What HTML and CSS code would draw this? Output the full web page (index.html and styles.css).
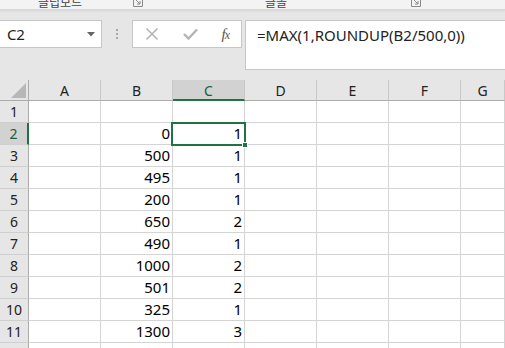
FILE: index.html
```html
<!DOCTYPE html>
<html>
<head>
<meta charset="utf-8">
<link rel="stylesheet" href="styles.css">
</head>
<body>
<div class="ribbon">
  <span class="grp grp1">클립보드</span>
  <span class="launch l1"><svg width="10" height="8" viewBox="0 0 10 8"><path d="M0.5 0 V7.5 H9.5 V0 M3 1 L7 5 M7 2 V5 H4" fill="none" stroke="#8a8a8a" stroke-width="1"/></svg></span>
  <span class="grp grp2">글꼴</span>
  <span class="launch l2"><svg width="10" height="8" viewBox="0 0 10 8"><path d="M0.5 0 V7.5 H9.5 V0 M3 1 L7 5 M7 2 V5 H4" fill="none" stroke="#8a8a8a" stroke-width="1"/></svg></span>
</div>
<div class="fbar">
  <div class="namebox">
    <span class="ref">C2</span>
    <svg class="caret" width="8" height="5" viewBox="0 0 8 5"><path d="M0 0 H8 L4 4.5 Z" fill="#666"/></svg>
  </div>
  <div class="dots"><i></i><i></i><i></i></div>
  <div class="fxbox">
    <svg width="14" height="14" viewBox="0 0 14 14"><path d="M1.5 1.5 L12.5 12.5 M12.5 1.5 L1.5 12.5" stroke="#b4b4b4" stroke-width="1.6" fill="none"/></svg>
    <svg width="15" height="12" viewBox="0 0 15 12"><path d="M1 6 L5.5 10.5 L14 1.5" stroke="#b4b4b4" stroke-width="2.4" fill="none"/></svg>
    <span class="fx">f<span class="x">x</span></span>
  </div>
  <div class="finput">=MAX(1,ROUNDUP(B2/500,0))</div>
</div>
<div class="sheet">
  <div class="corner"><svg width="15" height="15" viewBox="0 0 15 15"><path d="M15 0 V15 H0 Z" fill="#b7b7b7"/></svg></div>
  <div class="ch">A</div><div class="ch">B</div><div class="ch sel">C</div><div class="ch">D</div><div class="ch">E</div><div class="ch">F</div><div class="ch">G</div>

  <div class="rh">1</div><div class="c"></div><div class="c"></div><div class="c"></div><div class="c"></div><div class="c"></div><div class="c"></div><div class="c"></div>
  <div class="rh sel">2</div><div class="c"></div><div class="c">0</div><div class="c">1</div><div class="c"></div><div class="c"></div><div class="c"></div><div class="c"></div>
  <div class="rh">3</div><div class="c"></div><div class="c">500</div><div class="c">1</div><div class="c"></div><div class="c"></div><div class="c"></div><div class="c"></div>
  <div class="rh">4</div><div class="c"></div><div class="c">495</div><div class="c">1</div><div class="c"></div><div class="c"></div><div class="c"></div><div class="c"></div>
  <div class="rh">5</div><div class="c"></div><div class="c">200</div><div class="c">1</div><div class="c"></div><div class="c"></div><div class="c"></div><div class="c"></div>
  <div class="rh">6</div><div class="c"></div><div class="c">650</div><div class="c">2</div><div class="c"></div><div class="c"></div><div class="c"></div><div class="c"></div>
  <div class="rh">7</div><div class="c"></div><div class="c">490</div><div class="c">1</div><div class="c"></div><div class="c"></div><div class="c"></div><div class="c"></div>
  <div class="rh">8</div><div class="c"></div><div class="c">1000</div><div class="c">2</div><div class="c"></div><div class="c"></div><div class="c"></div><div class="c"></div>
  <div class="rh">9</div><div class="c"></div><div class="c">501</div><div class="c">2</div><div class="c"></div><div class="c"></div><div class="c"></div><div class="c"></div>
  <div class="rh">10</div><div class="c"></div><div class="c">325</div><div class="c">1</div><div class="c"></div><div class="c"></div><div class="c"></div><div class="c"></div>
  <div class="rh">11</div><div class="c"></div><div class="c">1300</div><div class="c">3</div><div class="c"></div><div class="c"></div><div class="c"></div><div class="c"></div>
  <div class="rh"></div><div class="c"></div><div class="c"></div><div class="c"></div><div class="c"></div><div class="c"></div><div class="c"></div><div class="c"></div>

  <div class="selbox"><span class="handle"></span></div>
</div>
</body>
</html>
```

FILE: styles.css
```css
* { box-sizing: border-box; }
html, body { margin: 0; padding: 0; }
body {
  width: 505px;
  height: 348px;
  overflow: hidden;
  background: #e6e6e6;
  font-family: "Noto Sans", "Open Sans", "Noto Sans CJK KR", sans-serif;
  color: #000;
}
.ribbon {
  position: relative;
  height: 10px;
  background: #f3f3f3;
  border-bottom: 1px solid #d8d8d8;
  box-shadow: 0 1px 2px rgba(0,0,0,0.08);
  overflow: hidden;
}
.grp {
  position: absolute;
  bottom: 1px;
  font-family: "Noto Sans CJK KR", sans-serif;
  font-size: 12px;
  line-height: 12px;
  color: #444;
}
.grp1 { left: 38px; }
.grp2 { left: 265px; }
.launch { position: absolute; bottom: 2px; line-height: 0; }
.l1 { left: 133px; }
.l2 { left: 411px; }

.fbar {
  display: flex;
  align-items: flex-start;
  height: 70px;
  padding-top: 10px;
}
.namebox {
  width: 102px;
  height: 28px;
  background: #fff;
  border: 1px solid #c6c6c6;
  border-left: none;
  display: flex;
  align-items: center;
  justify-content: space-between;
  padding: 0 6px 0 7px;
}
.ref { font-size: 15px; color: #222; letter-spacing: -0.3px; }
.caret { margin-top: 1px; }
.dots {
  width: 30px;
  height: 28px;
  display: flex;
  flex-direction: column;
  align-items: center;
  justify-content: center;
  gap: 2px;
}
.dots i { display: block; width: 2px; height: 2px; background: #a8a8a8; }
.fxbox {
  width: 110px;
  height: 28px;
  background: #fff;
  border: 1px solid #c6c6c6;
  display: flex;
  align-items: center;
  justify-content: space-between;
  padding: 0 12px 0 12px;
}
.fx {
  font-family: "Liberation Serif", serif;
  font-style: italic;
  font-size: 15px;
  color: #555;
  letter-spacing: -1px;
}
.fx .x { font-size: 12px; }
.finput {
  margin-left: 3px;
  flex: 1;
  height: 50px;
  background: #fff;
  border: 1px solid #c6c6c6;
  border-right: none;
  padding: 4px 0 0 11px;
  font-size: 15px;
  line-height: 20px;
  color: #222;
}

.sheet {
  position: relative;
  display: grid;
  grid-template-columns: 29px repeat(6, 72px) 1fr;
  grid-template-rows: 21px repeat(12, 22px);
}
.corner {
  background: #e6e6e6;
  border-right: 1px solid #ababab;
  border-bottom: 1px solid #ababab;
  display: flex;
  align-items: flex-end;
  justify-content: flex-end;
  padding: 0 2px 2px 0;
}
.ch {
  background: #e6e6e6;
  border-bottom: 1px solid #ababab;
  border-right: 1px solid #c8c8c8;
  display: flex;
  align-items: center;
  justify-content: center;
  font-size: 14px;
  color: #222;
  padding-top: 1px;
}
.ch.sel {
  background: #d2d2d2;
  border-bottom: 2px solid #217346;
  color: #1b5e38;
}
.rh {
  background: #e6e6e6;
  border-right: 1px solid #ababab;
  border-bottom: 1px solid #cfcfcf;
  display: flex;
  align-items: center;
  justify-content: center;
  font-size: 14px;
  color: #222;
}
.rh.sel {
  background: #d2d2d2;
  border-right: 2px solid #217346;
  color: #1b5e38;
}
.c {
  background: #fff;
  border-right: 1px solid #d4d4d4;
  border-bottom: 1px solid #d4d4d4;
  text-align: right;
  padding-right: 2px;
  font-size: 15px;
  line-height: 21px;
}
.selbox {
  position: absolute;
  left: 171px;
  top: 42px;
  width: 75px;
  height: 24px;
  border: 2px solid #217346;
}
.handle {
  position: absolute;
  right: -4px;
  bottom: -4px;
  width: 6px;
  height: 6px;
  background: #217346;
  border: 1px solid #fff;
}
```
